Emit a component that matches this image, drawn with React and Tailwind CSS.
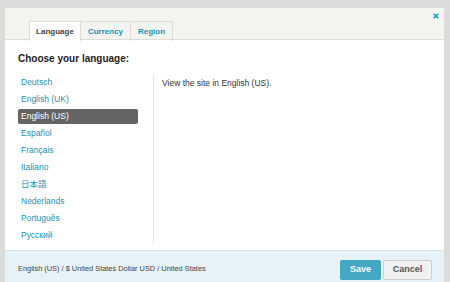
import React from 'react'

const LANGS = ['Deutsch', 'English (UK)', 'English (US)', 'Español', 'Français', 'Italiano', '日本語', 'Nederlands', 'Português', 'Русский']

export default function App() {
  const selected = 'English (US)'
  return (
    <div className="w-[450px] h-[282px] overflow-hidden bg-[#dcdcda] pt-[8px] pl-[5px] pr-[6px]" style={{ fontFamily: '"Liberation Sans", Arial, "Noto Sans CJK JP", sans-serif' }}>
      <div className="h-[274px] bg-white flex flex-col">
        {/* header with tabs */}
        <div className="relative h-[32px] bg-[#f3f3ef] border-b border-[#dcdcd8] pl-[24px] pt-[13px] flex">
          <div className="flex h-[20px] -mb-px text-[8px] font-bold">
            <div className="w-[52px] bg-white border border-b-0 border-[#dcdcd8] flex items-center justify-center text-[#444]">Language</div>
            <div className="w-[50px] border-t border-r border-[#dcdcd8] flex items-center justify-center text-[#2590b0]">Currency</div>
            <div className="w-[42px] border-t border-r border-[#dcdcd8] flex items-center justify-center text-[#2590b0]">Region</div>
          </div>
          <svg className="absolute right-[5px] top-[5px]" width="6" height="6" viewBox="0 0 6 6">
            <path d="M0.7 0.7L5.3 5.3M5.3 0.7L0.7 5.3" stroke="#1e9cc0" strokeWidth="1.6" />
          </svg>
        </div>

        {/* body */}
        <div className="flex-1 px-[13px]">
          <h2 className="mt-[12px] text-[10px] font-bold text-[#222] leading-[13px]">Choose your language:</h2>
          <div className="flex mt-[9px]">
            <ul className="w-[136px] pr-[15px] border-r border-[#e6e6e6] text-[8.5px]">
              {LANGS.map(l => (
                <li key={l} className="h-[17px] py-[1px]">
                  <span className={'block h-[15px] leading-[15px] px-[3px] rounded-[2px] ' + (l === selected ? 'bg-[#646464] text-white' : 'text-[#2590b0]')}>{l}</span>
                </li>
              ))}
            </ul>
            <p className="pl-[8px] pt-[3px] text-[8.5px] text-[#333] leading-[12px]">View the site in English (US).</p>
          </div>
        </div>

        {/* footer */}
        <div className="h-[32px] bg-[#e7f2f8] border-t border-[#d3e6ef] flex items-center justify-between pl-[13px] pr-[12px]">
          <span className="text-[7.4px] text-[#444] mt-[5px]">English (US) / $ United States Dollar USD / United States</span>
          <div className="flex gap-[2px] mt-[7px]">
            <button className="w-[41px] h-[20px] rounded-[2px] bg-[#45a8c2] text-white text-[9px] font-bold">Save</button>
            <button className="w-[49px] h-[20px] rounded-[2px] bg-[#f1f1ef] border border-[#cfcfcb] text-[#555] text-[9px] font-bold">Cancel</button>
          </div>
        </div>
      </div>
    </div>
  )
}
